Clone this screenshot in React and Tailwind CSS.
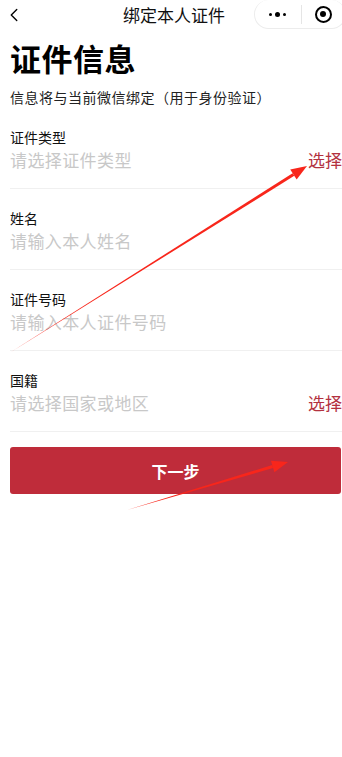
import { ChevronLeft } from 'lucide-react';

const fields = [
  { label: '证件类型', placeholder: '请选择证件类型', select: true },
  { label: '姓名', placeholder: '请输入本人姓名' },
  { label: '证件号码', placeholder: '请输入本人证件号码' },
  { label: '国籍', placeholder: '请选择国家或地区', select: true },
];

function Arrow({ x1, y1, x2, y2 }) {
  // tapering annotation arrow
  const dx = x2 - x1;
  const dy = y2 - y1;
  const len = Math.hypot(dx, dy);
  const ux = dx / len;
  const uy = dy / len;
  const nx = -uy;
  const ny = ux;
  const head = 16;
  const bx = x2 - ux * head;
  const by = y2 - uy * head;
  const w = 1.6;
  const hw = 6;
  const shaft = `${x1},${y1} ${bx + nx * w},${by + ny * w} ${bx - nx * w},${by - ny * w}`;
  const tip = `${x2},${y2} ${bx + nx * hw},${by + ny * hw} ${bx - nx * hw},${by - ny * hw}`;
  return (
    <g fill="#f8261b">
      <polygon points={shaft} />
      <polygon points={tip} />
    </g>
  );
}

export default function App() {
  return (
    <div
      className="relative min-h-[757px] w-[342px] bg-white text-black overflow-hidden"
      style={{ fontFamily: '"Noto Sans CJK SC", "Noto Sans", sans-serif' }}
    >
      {/* nav bar */}
      <div className="relative flex items-center h-[29px]">
        <ChevronLeft className="ml-[3px] w-[22px] h-[22px] text-black" strokeWidth={1.5} />
        <div className="absolute left-0 right-0 text-center text-[17px] leading-[29px] text-[#111] pointer-events-none pl-[6px]">
          绑定本人证件
        </div>
        <div className="ml-auto flex items-center h-[29px] w-[92px] -mr-[4px] rounded-l-full rounded-r-full border border-[#ececec] border-t-0">
          <div className="flex items-center justify-center gap-[3px] w-[47px]">
            <span className="w-[3px] h-[3px] rounded-full bg-black" />
            <span className="w-[5px] h-[5px] rounded-full bg-black" />
            <span className="w-[3px] h-[3px] rounded-full bg-black" />
          </div>
          <div className="w-px h-[19px] bg-[#e5e5e5]" />
          <div className="flex items-center justify-center w-[44px]">
            <div className="w-[17px] h-[17px] rounded-full border-2 border-black flex items-center justify-center">
              <div className="w-[6px] h-[6px] rounded-full bg-black" />
            </div>
          </div>
        </div>
      </div>

      <div className="pl-[10px]">
        <h1 className="mt-[9px] text-[31px] leading-[40px] font-bold tracking-[0.5px]">证件信息</h1>
        <p className="mt-[9px] text-[14px] leading-[20px] text-[#222] tracking-[0.5px]">信息将与当前微信绑定（用于身份验证）</p>

        <div className="mt-[1px]">
          {fields.map((f) => (
            <div key={f.label} className="border-b border-[#f0f0f0] pt-[19px] pb-[15px]">
              <div className="text-[14px] leading-[20px] text-[#111]">{f.label}</div>
              <div className="flex items-center justify-between">
                <span className="text-[17px] leading-[26px] text-[#c8c8c8] tracking-[0.4px]">{f.placeholder}</span>
                {f.select && <span className="text-[17px] leading-[26px] text-[#b3323f]">选择</span>}
              </div>
            </div>
          ))}
        </div>

        <div className="mt-[15px] pr-[1px]">
          <button className="w-full h-[47px] rounded-[3px] bg-[#bf2c3a] text-white text-[16px] font-bold">
            下一步
          </button>
        </div>
      </div>

      {/* annotation arrows */}
      <svg className="absolute left-0 top-0 pointer-events-none" width="342" height="757">
        <Arrow x1={11} y1={352} x2={307} y2={166} />
        <Arrow x1={127} y1={510} x2={288} y2={462} />
      </svg>
    </div>
  );
}
